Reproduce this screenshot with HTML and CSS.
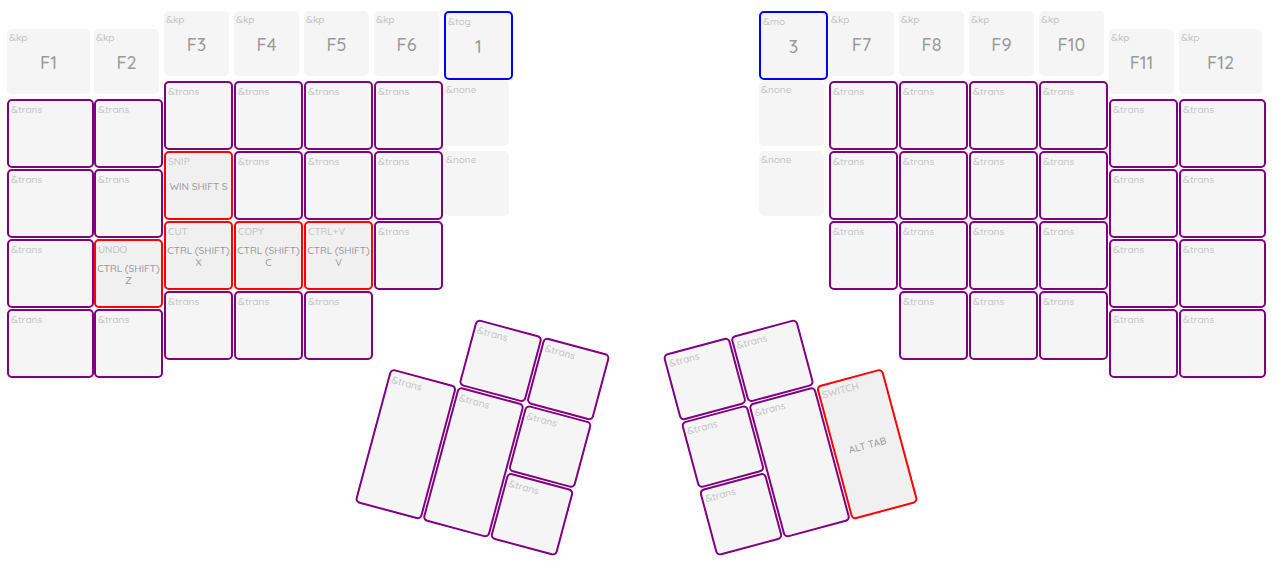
FILE: index.html
```html
<!DOCTYPE html>
<html lang="en">
<head>
<meta charset="utf-8">
<title>Keymap layer</title>
<link rel="stylesheet" href="styles.css">
</head>
<body>
<main class="keyboard">
  <section class="half" aria-label="Left half">
    <div class="columns">
      <div class="column wide low">
        <button class="key"><span class="behaviour">&amp;kp</span><span class="value">F1</span></button>
        <button class="key trans"><span class="behaviour">&amp;trans</span></button>
        <button class="key trans"><span class="behaviour">&amp;trans</span></button>
        <button class="key trans"><span class="behaviour">&amp;trans</span></button>
        <button class="key trans"><span class="behaviour">&amp;trans</span></button>
      </div>
      <div class="column low">
        <button class="key"><span class="behaviour">&amp;kp</span><span class="value">F2</span></button>
        <button class="key trans"><span class="behaviour">&amp;trans</span></button>
        <button class="key trans"><span class="behaviour">&amp;trans</span></button>
        <button class="key combo"><span class="behaviour">UNDO</span><span class="value">CTRL (SHIFT) Z</span></button>
        <button class="key trans"><span class="behaviour">&amp;trans</span></button>
      </div>
      <div class="column">
        <button class="key"><span class="behaviour">&amp;kp</span><span class="value">F3</span></button>
        <button class="key trans"><span class="behaviour">&amp;trans</span></button>
        <button class="key combo"><span class="behaviour">SNIP</span><span class="value">WIN SHIFT S</span></button>
        <button class="key combo"><span class="behaviour">CUT</span><span class="value">CTRL (SHIFT) X</span></button>
        <button class="key trans"><span class="behaviour">&amp;trans</span></button>
      </div>
      <div class="column">
        <button class="key"><span class="behaviour">&amp;kp</span><span class="value">F4</span></button>
        <button class="key trans"><span class="behaviour">&amp;trans</span></button>
        <button class="key trans"><span class="behaviour">&amp;trans</span></button>
        <button class="key combo"><span class="behaviour">COPY</span><span class="value">CTRL (SHIFT) C</span></button>
        <button class="key trans"><span class="behaviour">&amp;trans</span></button>
      </div>
      <div class="column">
        <button class="key"><span class="behaviour">&amp;kp</span><span class="value">F5</span></button>
        <button class="key trans"><span class="behaviour">&amp;trans</span></button>
        <button class="key trans"><span class="behaviour">&amp;trans</span></button>
        <button class="key combo"><span class="behaviour">CTRL+V</span><span class="value">CTRL (SHIFT) V</span></button>
        <button class="key trans"><span class="behaviour">&amp;trans</span></button>
      </div>
      <div class="column">
        <button class="key"><span class="behaviour">&amp;kp</span><span class="value">F6</span></button>
        <button class="key trans"><span class="behaviour">&amp;trans</span></button>
        <button class="key trans"><span class="behaviour">&amp;trans</span></button>
        <button class="key trans"><span class="behaviour">&amp;trans</span></button>
      </div>
      <div class="column">
        <button class="key layer"><span class="behaviour">&amp;tog</span><span class="value">1</span></button>
        <button class="key"><span class="behaviour">&amp;none</span></button>
        <button class="key"><span class="behaviour">&amp;none</span></button>
      </div>
    </div>
    <div class="thumbs thumbs-left">
      <button class="key trans middle"><span class="behaviour">&amp;trans</span></button>
      <button class="key trans last"><span class="behaviour">&amp;trans</span></button>
      <button class="key trans tall first"><span class="behaviour">&amp;trans</span></button>
      <button class="key trans tall middle"><span class="behaviour">&amp;trans</span></button>
      <button class="key trans last"><span class="behaviour">&amp;trans</span></button>
      <button class="key trans last"><span class="behaviour">&amp;trans</span></button>
    </div>
  </section>

  <section class="half" aria-label="Right half">
    <div class="columns columns-right">
      <div class="column">
        <button class="key layer"><span class="behaviour">&amp;mo</span><span class="value">3</span></button>
        <button class="key"><span class="behaviour">&amp;none</span></button>
        <button class="key"><span class="behaviour">&amp;none</span></button>
      </div>
      <div class="column">
        <button class="key"><span class="behaviour">&amp;kp</span><span class="value">F7</span></button>
        <button class="key trans"><span class="behaviour">&amp;trans</span></button>
        <button class="key trans"><span class="behaviour">&amp;trans</span></button>
        <button class="key trans"><span class="behaviour">&amp;trans</span></button>
      </div>
      <div class="column">
        <button class="key"><span class="behaviour">&amp;kp</span><span class="value">F8</span></button>
        <button class="key trans"><span class="behaviour">&amp;trans</span></button>
        <button class="key trans"><span class="behaviour">&amp;trans</span></button>
        <button class="key trans"><span class="behaviour">&amp;trans</span></button>
        <button class="key trans"><span class="behaviour">&amp;trans</span></button>
      </div>
      <div class="column">
        <button class="key"><span class="behaviour">&amp;kp</span><span class="value">F9</span></button>
        <button class="key trans"><span class="behaviour">&amp;trans</span></button>
        <button class="key trans"><span class="behaviour">&amp;trans</span></button>
        <button class="key trans"><span class="behaviour">&amp;trans</span></button>
        <button class="key trans"><span class="behaviour">&amp;trans</span></button>
      </div>
      <div class="column">
        <button class="key"><span class="behaviour">&amp;kp</span><span class="value">F10</span></button>
        <button class="key trans"><span class="behaviour">&amp;trans</span></button>
        <button class="key trans"><span class="behaviour">&amp;trans</span></button>
        <button class="key trans"><span class="behaviour">&amp;trans</span></button>
        <button class="key trans"><span class="behaviour">&amp;trans</span></button>
      </div>
      <div class="column low">
        <button class="key"><span class="behaviour">&amp;kp</span><span class="value">F11</span></button>
        <button class="key trans"><span class="behaviour">&amp;trans</span></button>
        <button class="key trans"><span class="behaviour">&amp;trans</span></button>
        <button class="key trans"><span class="behaviour">&amp;trans</span></button>
        <button class="key trans"><span class="behaviour">&amp;trans</span></button>
      </div>
      <div class="column wide low">
        <button class="key"><span class="behaviour">&amp;kp</span><span class="value">F12</span></button>
        <button class="key trans"><span class="behaviour">&amp;trans</span></button>
        <button class="key trans"><span class="behaviour">&amp;trans</span></button>
        <button class="key trans"><span class="behaviour">&amp;trans</span></button>
        <button class="key trans"><span class="behaviour">&amp;trans</span></button>
      </div>
    </div>
    <div class="thumbs thumbs-right">
      <button class="key trans first"><span class="behaviour">&amp;trans</span></button>
      <button class="key trans middle"><span class="behaviour">&amp;trans</span></button>
      <button class="key trans first"><span class="behaviour">&amp;trans</span></button>
      <button class="key trans tall middle"><span class="behaviour">&amp;trans</span></button>
      <button class="key combo tall last"><span class="behaviour">SWITCH</span><span class="value">ALT TAB</span></button>
      <button class="key trans first"><span class="behaviour">&amp;trans</span></button>
    </div>
  </section>
</main>
</body>
</html>
```
FILE: styles.css
```css
body {
  margin: 0;
  background: #fff;
  font-family: Quicksand, Lato, sans-serif;
  font-weight: 500;
}

.keyboard {
  display: flex;
  justify-content: space-between;
  min-width: 1220px;
  box-sizing: border-box;
  padding: 11px 15px 48px 7px;
}

/* The finger columns and the thumb cluster share one grid cell. */
.half {
  display: grid;
  grid-template-columns: 580px;
}

.columns,
.thumbs {
  grid-area: 1 / 1;
}

.columns {
  display: flex;
  align-items: flex-start;
}

.columns-right {
  justify-content: flex-end;
}

.column {
  display: grid;
  grid-auto-rows: 70px;
  place-items: start;
  width: 70px;
}

.column.low {
  padding-top: 18px;
}

.column.wide {
  width: 87px;
}

.key {
  display: grid;
  box-sizing: content-box;
  width: 65px;
  height: 65px;
  margin: 0;
  padding: 0;
  border: 0 solid;
  border-radius: 5px;
  background: #f5f5f5;
  color: #999;
  font-family: inherit;
  font-weight: inherit;
  cursor: pointer;
}

.wide .key {
  width: 83px;
}

.trans,
.layer,
.combo {
  border-width: 2px;
}

.trans {
  border-color: purple;
}

.layer {
  border-color: blue;
}

.combo {
  border-color: red;
  background: #f0f0f0;
}

.behaviour,
.value {
  grid-area: 1 / 1;
}

.behaviour {
  place-self: start;
  padding: 2px;
  color: #c4c4c4;
  font-size: 10px;
  line-height: 14px;
}

.value {
  place-self: center;
  padding-top: 2px;
  font-size: 18px;
  line-height: 20px;
  text-align: center;
}

.combo .value {
  font-size: 10px;
  line-height: 12px;
}

.thumbs {
  display: grid;
  grid-template: repeat(3, 69px) / repeat(3, 69px);
  gap: 1px;
  align-self: start;
  margin-top: 313px;
}

.thumbs-left {
  justify-self: end;
  transform: rotate(15deg);
}

.thumbs-right {
  justify-self: start;
  transform: rotate(-15deg);
}

.thumbs .first {
  grid-column: 1;
}

.thumbs .middle {
  grid-column: 2;
}

.thumbs .last {
  grid-column: 3;
}

.thumbs .tall {
  grid-row: 2 / span 2;
  height: 135px;
}
```
